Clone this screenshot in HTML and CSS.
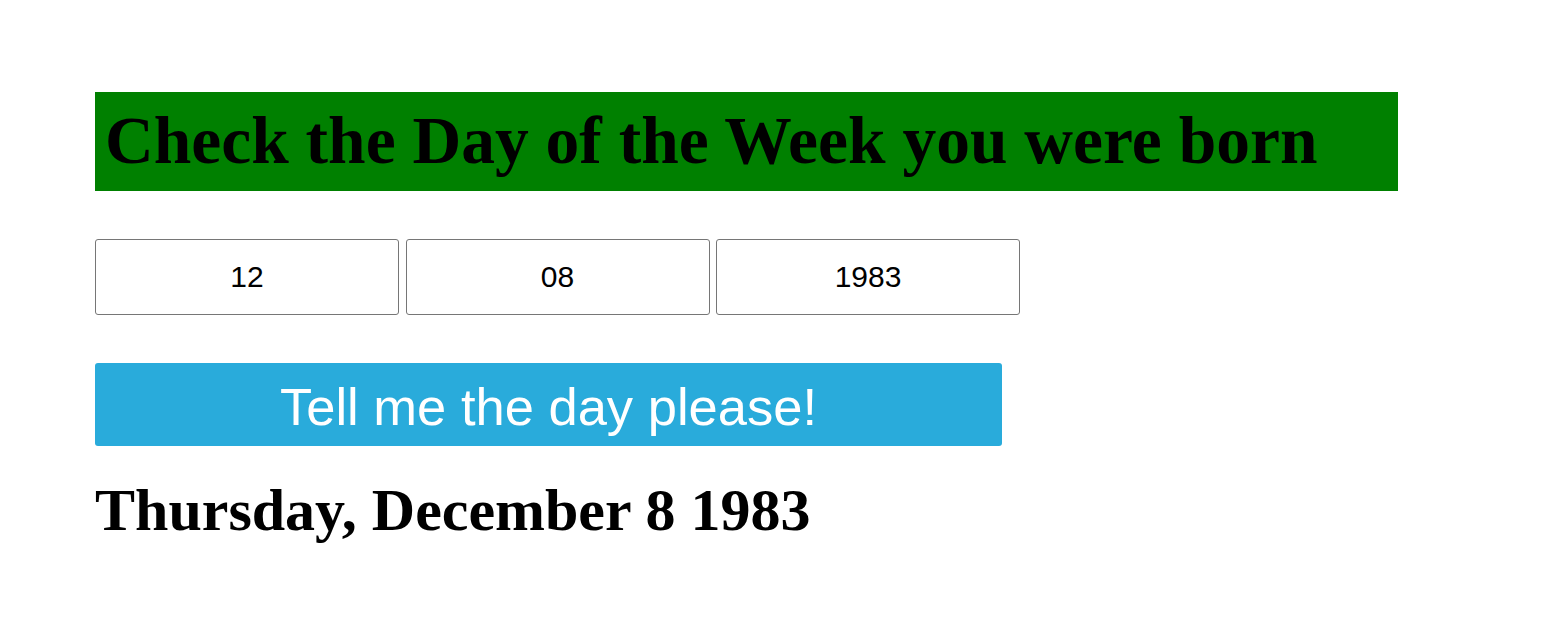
FILE: index.html
```html
<!DOCTYPE html>
<html>
<head>
<meta charset="utf-8">
<title>Day of the Week</title>
<link rel="stylesheet" href="styles.css">
</head>
<body>
<main class="page">
  <h1 class="title">Check the Day of the Week you were born</h1>
  <div class="fields">
    <input class="field" type="text" value="12">
    <input class="field" type="text" value="08">
    <input class="field" type="text" value="1983">
  </div>
  <button class="submit" type="button">Tell me the day please!</button>
  <h2 class="result">Thursday, December 8 1983</h2>
</main>
</body>
</html>
```
FILE: styles.css
```css
html, body {
  margin: 0;
  padding: 0;
  background: #ffffff;
}

.page {
  padding: 92px 0 0 95px;
  font-family: "Liberation Serif", "Times New Roman", serif;
}

.title {
  box-sizing: border-box;
  width: 1303px;
  height: 99px;
  margin: 0;
  padding: 10px 10px 0 10px;
  background: #008000;
  color: #000000;
  font-size: 67.5px;
  font-weight: bold;
  line-height: normal;
}

.fields {
  display: flex;
  gap: 6.5px;
  margin-top: 48px;
}

.field {
  box-sizing: border-box;
  width: 304px;
  height: 76px;
  margin: 0;
  padding: 0;
  border: 1px solid #767676;
  border-radius: 3px;
  background: #ffffff;
  color: #000000;
  font-family: "Liberation Sans", Arial, sans-serif;
  font-size: 30px;
  text-align: center;
}

.submit {
  display: block;
  box-sizing: border-box;
  width: 907px;
  height: 83px;
  margin: 48px 0 0 0;
  padding: 6px 0 0 0;
  border: none;
  border-radius: 3px;
  background: #29abdb;
  color: #ffffff;
  font-family: "Liberation Sans", Arial, sans-serif;
  font-size: 52.5px;
  line-height: 1;
}

.result {
  margin: 30px 0 0 0;
  font-size: 60px;
  font-weight: bold;
  line-height: normal;
  color: #000000;
}
```
